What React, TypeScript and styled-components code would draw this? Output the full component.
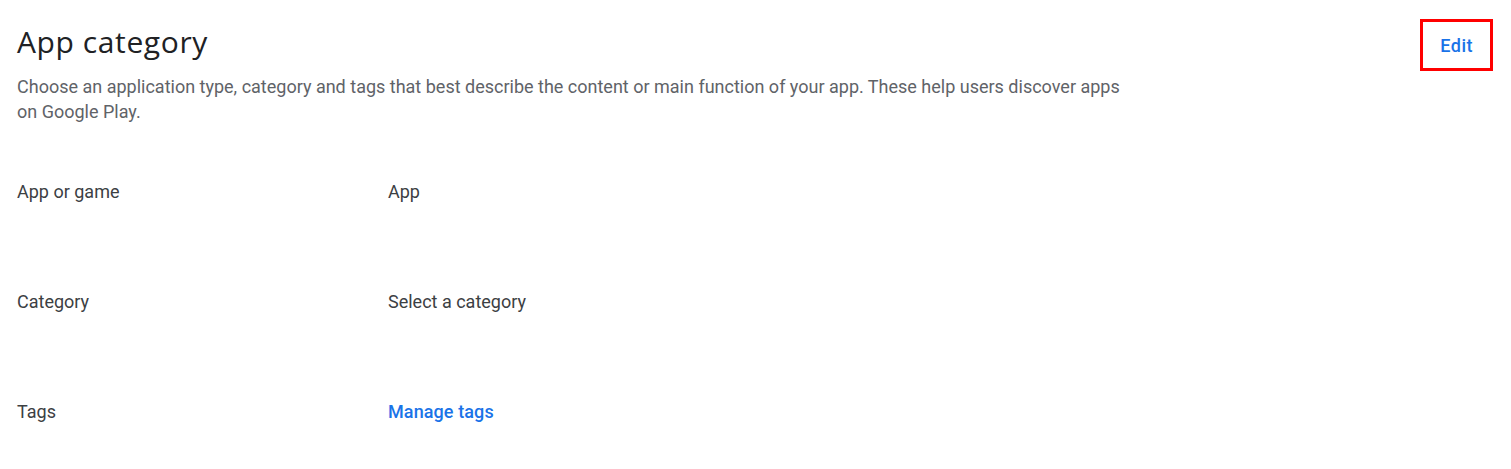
import React from "react"
import styled, { createGlobalStyle } from "styled-components"

const GlobalStyle = createGlobalStyle`
  body {
    margin: 0;
    background: #fff;
    font-family: Roboto, "Liberation Sans", sans-serif;
  }
`

const Page = styled.div`
  padding: 19px 18px 0 17px;
`

const Header = styled.div`
  display: flex;
  justify-content: space-between;
  align-items: flex-start;
`

const Intro = styled.div`
  padding-top: 5px;
`

const Title = styled.h1`
  margin: 0;
  font-family: "Open Sans", Roboto, sans-serif;
  font-size: 30px;
  font-weight: 400;
  line-height: 36px;
  letter-spacing: 0.6px;
  color: #202124;
`

const Description = styled.p`
  margin: 14px 0 0;
  max-width: 1120px;
  font-size: 18px;
  line-height: 25px;
  color: #5f6368;
`

const EditButton = styled.button`
  display: flex;
  align-items: center;
  justify-content: center;
  height: 52px;
  padding: 0 17px;
  border: 3px solid #ff0000;
  background: #fff;
  font-family: Roboto, sans-serif;
  font-size: 18px;
  font-weight: 500;
  letter-spacing: 0.5px;
  color: #1a73e8;
  cursor: pointer;
`

const Fields = styled.dl`
  display: grid;
  grid-template-columns: 371px 1fr;
  row-gap: 86px;
  margin: 56px 0 0;
`

const Label = styled.dt`
  font-size: 18px;
  line-height: 24px;
  color: #3c4043;
`

const Value = styled.dd<{ $link?: boolean }>`
  margin: 0;
  font-size: 18px;
  line-height: 24px;
  font-weight: ${p => (p.$link ? 500 : 400)};
  letter-spacing: ${p => (p.$link ? "0.1px" : "normal")};
  color: ${p => (p.$link ? "#1a73e8" : "#3c4043")};
  cursor: ${p => (p.$link ? "pointer" : "default")};
`

const fields = [
  { label: "App or game", value: "App" },
  { label: "Category", value: "Select a category" },
  { label: "Tags", value: "Manage tags", link: true },
]

export default function App() {
  return (
    <>
      <GlobalStyle />
      <Page>
        <Header>
          <Intro>
            <Title>App category</Title>
            <Description>
              Choose an application type, category and tags that best describe
              the content or main function of your app. These help users
              discover apps on Google Play.
            </Description>
          </Intro>
          <EditButton>Edit</EditButton>
        </Header>
        <Fields>
          {fields.map(f => (
            <React.Fragment key={f.label}>
              <Label>{f.label}</Label>
              <Value $link={f.link}>{f.value}</Value>
            </React.Fragment>
          ))}
        </Fields>
      </Page>
    </>
  )
}
